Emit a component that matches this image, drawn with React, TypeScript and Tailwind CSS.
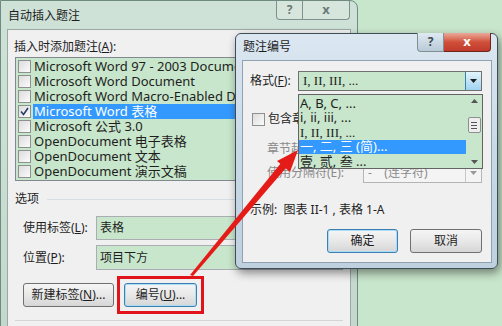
import React from "react";

const ui = "font-['Noto_Sans','Noto_Sans_CJK_SC',sans-serif]";
const serif = "font-['Liberation_Serif','Noto_Sans_CJK_SC',serif]";

function Check({ checked }: { checked?: boolean }) {
  return (
    <span className="flex h-[13px] w-[13px] shrink-0 items-center justify-center border border-[#8e8f8f] bg-gradient-to-br from-[#dcdcdc] to-[#fbfbfb]">
      {checked && (
        <svg width="9" height="9" viewBox="0 0 9 9">
          <path d="M1 4.5 L3.5 7.5 L8 1" fill="none" stroke="#2a3b6b" strokeWidth="1.6" />
        </svg>
      )}
    </span>
  );
}

function TitleButtons({ active }: { active?: boolean }) {
  return (
    <div className="flex">
      <div
        className={
          "flex h-[19px] w-[27px] items-center justify-center rounded-bl-[4px] border border-t-0 border-[#7f9090] text-[12px] font-bold " +
          (active ? "bg-gradient-to-b from-[#dfe9f1] to-[#b9cad8] text-[#3c4a55]" : "bg-[#d6e6dc] text-[#6b7a76]")
        }
      >
        ?
      </div>
      <div
        className={
          "flex h-[19px] w-[47px] items-center justify-center rounded-br-[4px] border border-l-0 border-t-0 text-[13px] font-bold " +
          (active
            ? "border-[#6e2418] bg-gradient-to-b from-[#e9a99a] via-[#d0503a] to-[#c0392b] text-white"
            : "border-[#7f9090] bg-[#d6e6dc] text-[#6b7a76]")
        }
      >
        x
      </div>
    </div>
  );
}

function Btn({ children, w, primary }: { children: React.ReactNode; w: string; primary?: boolean }) {
  return (
    <div
      className={
        "flex h-[24px] items-center justify-center rounded-[3px] border text-[12px] text-[#1e1e1e] bg-gradient-to-b from-[#f5f5f5] via-[#e8e8e8] to-[#d6d6d6] " +
        w +
        (primary ? " border-[#3c7fb1] shadow-[inset_0_0_0_1px_#a9dcf6]" : " border-[#707070]")
      }
    >
      {children}
    </div>
  );
}

const listItems = [
  "Microsoft Word 97 - 2003 Document",
  "Microsoft Word Document",
  "Microsoft Word Macro-Enabled Document",
  "Microsoft Word 表格",
  "Microsoft 公式 3.0",
  "OpenDocument 电子表格",
  "OpenDocument 文本",
  "OpenDocument 演示文稿",
];

export default function App() {
  return (
    <div className={"relative h-[326px] w-[502px] overflow-hidden bg-[#c8e6cb] text-[#1e1e1e] " + ui}>
      {/* back dialog */}
      <div className="flex h-[340px] w-[358px] flex-col rounded-tr-[8px] border border-[#6f8a80] bg-gradient-to-b from-[#cfe2d7] to-[#c3d8cc] px-[6px]">
        <div className="flex h-[28px] items-start justify-between">
          <span className="ml-[1px] mt-[7px] text-[12px] leading-[16px]">自动插入题注</span>
          <div className="mr-[1px]">
            <TitleButtons />
          </div>
        </div>
        <div className="flex flex-1 flex-col border border-[#9aaaa3] bg-[#f0f0f0] pl-[7px] pr-[7px] pt-[10px]">
          <span className="ml-[-1px] text-[12px] leading-[14px]">
            插入时添加题注(<span className="underline">A</span>):
          </span>
          <div className="mt-[3px] flex flex-col overflow-hidden border border-[#828790] bg-[#c8e6cb] pt-[1px] pb-[1px]">
            {listItems.map((t, i) => (
              <div key={t} className="flex h-[15px] items-center pl-[2px]">
                <Check checked={i === 3} />
                <span
                  className={
                    "ml-[2px] flex h-[15px] flex-1 items-center whitespace-nowrap pl-[1px] text-[13px] " +
                    (i === 3 ? "bg-[#3399ff] text-white" : "")
                  }
                >
                  {t}
                </span>
              </div>
            ))}
          </div>
          <div className="mt-[11px] flex items-center">
            <span className="text-[12px] leading-[14px]">选项</span>
            <div className="ml-[8px] h-px flex-1 bg-[#d5dfe5]" />
          </div>
          <div className="mt-[10px] flex items-center pl-[8px]">
            <span className="w-[73px] text-[12px]">
              使用标签(<span className="underline">L</span>):
            </span>
            <div className="flex h-[24px] flex-1 items-center border border-[#abadb3] bg-[#c8e6cb] pl-[3px] text-[12px]">表格</div>
          </div>
          <div className="mt-[5px] flex items-center pl-[8px]">
            <span className="w-[73px] text-[12px]">
              位置(<span className="underline">P</span>):
            </span>
            <div className="flex h-[25px] flex-1 items-center border border-[#abadb3] bg-[#c8e6cb] pl-[3px] text-[12px]">项目下方</div>
          </div>
          <div className="mt-[6px] flex items-center pl-[8px]">
            <Btn w="w-[91px]">
              新建标签(<span className="underline">N</span>)...
            </Btn>
            <div className="ml-[3px] border-[3px] border-[#e0141a] p-[4px]">
              <Btn w="w-[73px]" primary>
                编号(<span className="underline">U</span>)...
              </Btn>
            </div>
          </div>
          <div className="mt-[6px] h-px bg-[#d5d5d5]" />
        </div>
      </div>

      {/* front dialog */}
      <div className="absolute left-[235px] top-[33px] flex h-[236px] w-[263px] flex-col rounded-[6px] border border-[#3f4d58] bg-gradient-to-b from-[#dbe7f1] via-[#c9d9e6] to-[#bfd0de] pl-[6px] pr-[5px] pb-[5px] shadow-[2px_4px_10px_rgba(0,0,0,0.45)]">
        <div className="flex h-[26px] items-start justify-between">
          <span className="ml-[1px] mt-[5px] text-[12px] leading-[16px]">题注编号</span>
          <div className="mr-[1px] mt-[-1px]">
            <TitleButtons active />
          </div>
        </div>
        <div className="flex flex-1 flex-col border border-[#8ea2b3] bg-[#f0f0f0] pl-[7px] pr-[9px] pt-[10px]">
          <div className="flex items-center">
            <span className="w-[48px] text-[12px]">
              格式(<span className="underline">F</span>):
            </span>
            <div className="flex h-[20px] flex-1 items-center border border-[#707070] bg-[#c8e6cb]">
              <span className={"flex-1 pl-[4px] text-[13px] " + serif}>I, II, III, ...</span>
              <div className="flex h-full w-[16px] items-center justify-center border-l border-[#3c7fb1] bg-gradient-to-b from-[#e3f4fc] to-[#9fd3f1]">
                <svg width="7" height="4" viewBox="0 0 7 4">
                  <path d="M0 0 H7 L3.5 4 Z" fill="#1e1e1e" />
                </svg>
              </div>
            </div>
          </div>
          <div className="mt-[19px] flex items-center pl-[2px]">
            <Check />
            <span className="ml-[3px] w-[33px] overflow-hidden whitespace-nowrap text-[12px]">
              包含章节号(<span className="underline">C</span>)
            </span>
          </div>
          <div className="mt-[11px] flex items-center pl-[17px] text-[#8a8a8a]">
            <span className="w-[31px] overflow-hidden whitespace-nowrap text-[12px]">章节起始样式(P):</span>
            <div className="ml-[65px] h-[19px] flex-1 border border-[#b5b5b5] bg-[#f4f4f4]" />
          </div>
          <div className="mt-[5px] flex items-center pl-[17px] text-[#8a8a8a]">
            <span className="w-[96px] text-[12px]">使用分隔符(E):</span>
            <div className="flex h-[20px] flex-1 items-center border border-[#b5b5b5] bg-[#f4f4f4]">
              <span className="flex-1 pl-[4px] text-[12px]">-&nbsp;&nbsp;&nbsp;&nbsp;(连字符)</span>
              <div className="flex h-full w-[16px] items-center justify-center border-l border-[#c8c8c8]">
                <svg width="7" height="4" viewBox="0 0 7 4">
                  <path d="M0 0 H7 L3.5 4 Z" fill="#9a9a9a" />
                </svg>
              </div>
            </div>
          </div>
          <div className="mt-[20px] text-[12px] leading-[14px]">示例:&nbsp; 图表 II-1 , 表格 1-A</div>
          <div className="mt-[12px] flex justify-end gap-[12px]">
            <Btn w="w-[71px]" primary>
              确定
            </Btn>
            <Btn w="w-[72px]">取消</Btn>
          </div>
        </div>

        {/* open dropdown list */}
        <div className="absolute left-[62px] top-[60px] flex h-[75px] w-[185px] border border-[#646464] bg-[#c8e6cb]">
          <div className="flex flex-1 flex-col pt-[1px]">
            <div className="flex h-[14.6px] items-center pl-[1px] text-[13px]">A, B, C, ...</div>
            <div className="flex h-[14.6px] items-center pl-[1px] text-[13px]">i, ii, iii, ...</div>
            <div className={"flex h-[14.6px] items-center pl-[1px] text-[13px] " + serif}>I, II, III, ...</div>
            <div className="flex h-[14.6px] items-center bg-[#3399ff] pl-[1px] text-[13px] text-white">一, 二, 三 (简)...</div>
            <div className="flex h-[14.6px] items-center pl-[1px] text-[13px]">壹, 贰, 叁 ...</div>
          </div>
          <div className="flex w-[16px] flex-col items-center justify-between py-[4px]">
            <svg width="7" height="4" viewBox="0 0 7 4">
              <path d="M0 4 H7 L3.5 0 Z" fill="#555" />
            </svg>
            <div className="mt-[14px] flex h-[16px] w-[13px] flex-col items-center justify-center gap-[2px] rounded-[2px] border border-[#8f8f8f] bg-[#eeeeee]">
              <div className="h-px w-[6px] bg-[#555]" />
              <div className="h-px w-[6px] bg-[#555]" />
              <div className="h-px w-[6px] bg-[#555]" />
            </div>
            <div className="flex-1" />
            <svg width="7" height="4" viewBox="0 0 7 4">
              <path d="M0 0 H7 L3.5 4 Z" fill="#555" />
            </svg>
          </div>
        </div>
      </div>

      {/* red arrow */}
      <svg className="pointer-events-none absolute left-0 top-0" width="502" height="326" viewBox="0 0 502 326">
        <polygon points="190,275 193,276 286,168 281,163" fill="#e41b17" />
        <polygon points="298,150 290,172 277,161" fill="#e41b17" />
      </svg>
    </div>
  );
}
